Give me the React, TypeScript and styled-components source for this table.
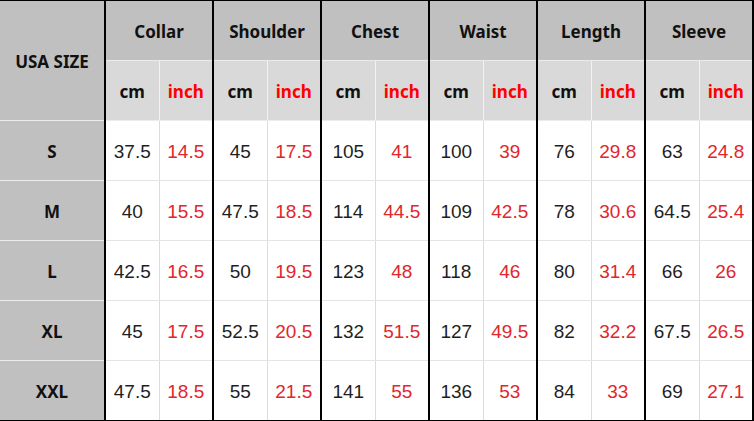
import styled, { createGlobalStyle } from "styled-components";

const GlobalStyle = createGlobalStyle`
  html, body {
    margin: 0;
    padding: 0;
    background: #ffffff;
  }
`;

const groups = ["Collar", "Shoulder", "Chest", "Waist", "Length", "Sleeve"];

const rows: { size: string; values: string[] }[] = [
  { size: "S", values: ["37.5", "14.5", "45", "17.5", "105", "41", "100", "39", "76", "29.8", "63", "24.8"] },
  { size: "M", values: ["40", "15.5", "47.5", "18.5", "114", "44.5", "109", "42.5", "78", "30.6", "64.5", "25.4"] },
  { size: "L", values: ["42.5", "16.5", "50", "19.5", "123", "48", "118", "46", "80", "31.4", "66", "26"] },
  { size: "XL", values: ["45", "17.5", "52.5", "20.5", "132", "51.5", "127", "49.5", "82", "32.2", "67.5", "26.5"] },
  { size: "XXL", values: ["47.5", "18.5", "55", "21.5", "141", "55", "136", "53", "84", "33", "69", "27.1"] },
];

const Table = styled.table`
  width: 753px;
  border-collapse: collapse;
  table-layout: fixed;
  border-top: 1px solid #000;
  border-bottom: 2px solid #000;
  border-right: 2px solid #000;

  th, td {
    padding: 3px 0 0;
    line-height: 20px;
  }
`;

const Row = styled.tr`
  height: 60px;
`;

const HeadText = `
  font-family: "Noto Sans", "Open Sans", sans-serif;
  font-weight: 700;
  font-size: 17px;
  color: #111;
`;

const SizeHead = styled.th`
  background: #c0c0c0;
  border-right: 2px solid #000;
  border-bottom: 1px solid #ececec;
  ${HeadText}
`;

const GroupHead = styled.th`
  background: #c0c0c0;
  border-right: 2px solid #000;
  border-bottom: 1px solid #ececec;
  ${HeadText}
`;

const UnitHead = styled.th<{ $inch?: boolean }>`
  background: #d9d9d9;
  border-right: ${(p) => (p.$inch ? "2px solid #000" : "1px solid #f2f2f2")};
  border-bottom: 1px solid #ececec;
  ${HeadText}
  color: ${(p) => (p.$inch ? "#ff0000" : "#111")};
`;

const SizeCell = styled.th`
  background: #c0c0c0;
  border-right: 2px solid #000;
  border-bottom: 1px solid #ececec;
  ${HeadText}
`;

const Cell = styled.td<{ $inch?: boolean }>`
  text-align: center;
  background: #fff;
  border-right: ${(p) => (p.$inch ? "2px solid #000" : "1px solid #dcdcdc")};
  border-bottom: 1px solid #e4e4e4;
  font-family: "Liberation Sans", Arial, sans-serif;
  font-size: 19px;
  color: ${(p) => (p.$inch ? "#e3262b" : "#1f1f1f")};
`;

export default function App() {
  return (
    <>
      <GlobalStyle />
      <Table>
        <colgroup>
          <col style={{ width: 105 }} />
          {Array.from({ length: 12 }, (_, i) => (
            <col key={i} style={{ width: 54 }} />
          ))}
        </colgroup>
        <thead>
          <Row>
            <SizeHead rowSpan={2}>USA SIZE</SizeHead>
            {groups.map((g) => (
              <GroupHead key={g} colSpan={2}>
                {g}
              </GroupHead>
            ))}
          </Row>
          <Row>
            {groups.map((g) => [
              <UnitHead key={g + "cm"}>cm</UnitHead>,
              <UnitHead key={g + "in"} $inch>
                inch
              </UnitHead>,
            ])}
          </Row>
        </thead>
        <tbody>
          {rows.map((r) => (
            <Row key={r.size}>
              <SizeCell>{r.size}</SizeCell>
              {r.values.map((v, i) => (
                <Cell key={i} $inch={i % 2 === 1}>
                  {v}
                </Cell>
              ))}
            </Row>
          ))}
        </tbody>
      </Table>
    </>
  );
}
